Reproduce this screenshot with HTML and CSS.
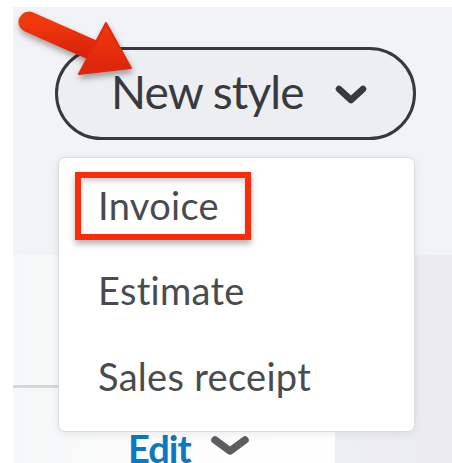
FILE: index.html
```html
<!DOCTYPE html>
<html lang="en">
<head>
<meta charset="utf-8">
<title>New style</title>
<link rel="stylesheet" href="styles.css">
</head>
<body>
<div class="page">
  <div class="toolbar">
    <button class="pill" type="button">
      <span class="pill-label">New style</span>
      <svg class="pill-chevron" viewBox="0 0 32 20" width="32" height="20" aria-hidden="true">
        <polyline points="4,4 16,15 28,4" fill="none" stroke="currentColor" stroke-width="6.5" stroke-linecap="round" stroke-linejoin="round"/>
      </svg>
    </button>
  </div>
  <div class="content">
    <div class="panel">
      <div class="rule"></div>
      <div class="panel-foot">
        <a class="edit-link" href="#">Edit</a>
        <svg class="edit-chevron" viewBox="0 0 38 20" width="38" height="20" aria-hidden="true">
          <polyline points="4,4 19,15 34,4" fill="none" stroke="currentColor" stroke-width="7.5" stroke-linecap="round" stroke-linejoin="round"/>
        </svg>
      </div>
    </div>
    <div class="aside"></div>
  </div>

  <ul class="menu">
    <li class="menu-item"><span class="callout">Invoice</span></li>
    <li class="menu-item">Estimate</li>
    <li class="menu-item">Sales receipt</li>
  </ul>

  <svg class="pointer" viewBox="0 0 150 95" width="150" height="95" aria-hidden="true">
    <defs>
      <linearGradient id="arrowFill" x1="0" y1="0" x2="0" y2="1">
        <stop offset="0" stop-color="#f2390f"/>
        <stop offset="1" stop-color="#da240a"/>
      </linearGradient>
      <filter id="arrowShadow" x="-20%" y="-20%" width="150%" height="160%">
        <feDropShadow dx="1" dy="4" stdDeviation="3" flood-color="#000" flood-opacity="0.35"/>
      </filter>
    </defs>
    <g filter="url(#arrowShadow)">
      <line x1="29" y1="22" x2="97" y2="52" stroke="url(#arrowFill)" stroke-width="21" stroke-linecap="round"/>
      <polygon points="131,68 106,23 79,74" fill="url(#arrowFill)" stroke="#e02a0c" stroke-width="2" stroke-linejoin="round"/>
    </g>
  </svg>
</div>
</body>
</html>
```

FILE: styles.css
```css
* {
  box-sizing: border-box;
}

html,
body {
  margin: 0;
  background: #ffffff;
}

.page {
  position: relative;
  width: 452px;
  height: 463px;
  padding: 7px 0 0 13px;
  display: flex;
  flex-direction: column;
  font-family: "Lato", "Open Sans", sans-serif;
  overflow: hidden;
}

/* top toolbar band holding the style picker */
.toolbar {
  flex-shrink: 0;
  height: 248px;
  background: #f2f3f6;
  padding: 40px 0 0 42px;
}

.pill {
  display: flex;
  align-items: center;
  gap: 31px;
  width: 361px;
  height: 93px;
  padding: 0 0 4px 53px;
  border: 3px solid #38393c;
  border-radius: 47px;
  background: #eceef1;
  color: #393a3d;
  font-family: inherit;
  cursor: pointer;
}

.pill-label {
  font-size: 46px;
  line-height: 1;
  letter-spacing: -0.9px;
}

.pill-chevron {
  margin-top: 6px;
  color: #393a3d;
}

/* lower part of the page */
.content {
  flex: 1;
  min-height: 0;
  display: flex;
  overflow: hidden;
}

.panel {
  width: 322px;
  display: flex;
  flex-direction: column;
  background: linear-gradient(90deg, #f6f7f8 0%, #fdfdfd 60%, #ffffff 100%);
}

.rule {
  flex-shrink: 0;
  margin-top: 130px;
  width: 46px;
  height: 3px;
  background: #d3d6db;
}

.panel-foot {
  flex-shrink: 0;
  display: flex;
  align-items: flex-start;
  gap: 20px;
  padding: 40px 0 0 115px;
}

.edit-link {
  color: #0b78c1;
  font-size: 38px;
  font-weight: 700;
  line-height: 40px;
  letter-spacing: -1px;
  text-decoration: none;
}

.edit-chevron {
  margin-top: 8px;
  color: #5d5e62;
}

.aside {
  flex: 1;
  background: linear-gradient(90deg, #eeeff2 0%, #ececf0 100%);
}

/* dropdown opened under the pill */
.menu {
  position: absolute;
  left: 58px;
  top: 157px;
  width: 357px;
  height: 275px;
  margin: 0;
  padding: 3px 0 0 39px;
  list-style: none;
  background: #ffffff;
  border: 1px solid #dadce0;
  border-radius: 7px;
  box-shadow: 0 2px 10px rgba(0, 0, 0, 0.08);
}

.menu-item {
  display: flex;
  align-items: center;
  height: 86px;
  font-size: 38px;
  line-height: 1;
  letter-spacing: 0.3px;
  color: #4a4b4e;
}

/* red annotation frame around the first option */
.callout {
  display: inline-flex;
  align-items: center;
  height: 68px;
  margin: 4px 0 0 -23px;
  padding: 0 26px 2px 17px;
  border: 6px solid #ff2a0a;
  box-shadow: 0 4px 6px rgba(0, 0, 0, 0.3), inset 0 4px 5px rgba(0, 0, 0, 0.16);
}

.pointer {
  position: absolute;
  left: 0;
  top: 0;
}
```
